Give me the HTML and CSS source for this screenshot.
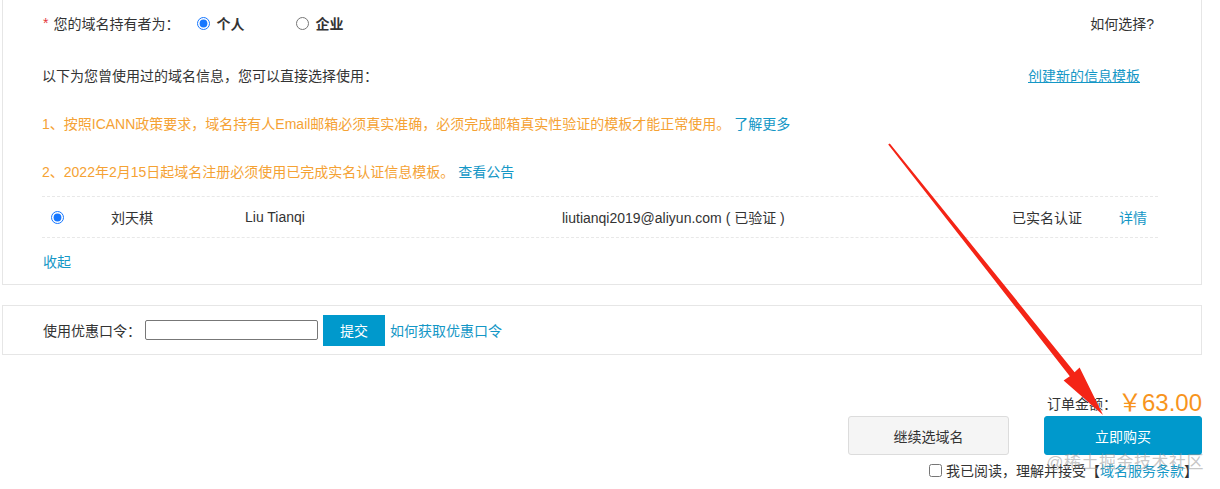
FILE: index.html
```html
<!DOCTYPE html>
<html lang="zh-CN">
<head>
<meta charset="utf-8">
<title>域名注册</title>
<link rel="stylesheet" href="styles.css">
</head>
<body>
<div class="page">
  <section class="panel holder-panel">
    <div class="owner-row">
      <div class="owner-left">
        <span class="req">*</span><span class="owner-label">您的域名持有者为：</span>
        <label class="opt"><input type="radio" name="owner" checked><span>个人</span></label>
        <label class="opt opt2"><input type="radio" name="owner"><span>企业</span></label>
      </div>
      <span class="how">如何选择?</span>
    </div>
    <div class="lines">
      <div class="line line-head">
        <span>以下为您曾使用过的域名信息，您可以直接选择使用：</span>
        <a class="link under create">创建新的信息模板</a>
      </div>
      <div class="line warn">1、按照ICANN政策要求，域名持有人Email邮箱必须真实准确，必须完成邮箱真实性验证的模板才能正常使用。 <a class="link">了解更多</a></div>
      <div class="line warn">2、2022年2月15日起域名注册必须使用已完成实名认证信息模板。 <a class="link">查看公告</a></div>
    </div>
    <div class="tpl-row">
      <div class="c-radio"><input type="radio" name="tpl" checked></div>
      <div>刘天棋</div>
      <div class="latin">Liu Tianqi</div>
      <div class="latin">liutianqi2019@aliyun.com ( 已验证 )</div>
      <div>已实名认证</div>
      <div><a class="link">详情</a></div>
    </div>
    <div class="collapse"><a class="link">收起</a></div>
  </section>

  <section class="panel coupon-panel">
    <span class="coupon-label">使用优惠口令：</span>
    <input class="coupon-input" type="text">
    <button class="submit-btn">提交</button>
    <a class="link coupon-link">如何获取优惠口令</a>
  </section>

  <div class="order">
    <div class="total"><span class="total-label">订单金额：</span><span class="price">￥63.00</span></div>
    <div class="actions">
      <button class="btn-ghost">继续选域名</button>
      <button class="btn-buy">立即购买</button>
    </div>
    <div class="agree">
      <input type="checkbox" class="agree-box"><span>我已阅读，理解并接受【<a class="link">域名服务条款</a>】</span>
    </div>
    <div class="watermark">@稀土掘金技术社区</div>
  </div>

  <svg class="arrow" width="1220" height="489" viewBox="0 0 1220 489" aria-hidden="true">
    <polygon fill="#f42416" points="888.2,144.6 889.8,143.4 1074.6,372.2 1079.6,367.5 1103,415 1063.6,380.5 1069.8,376.2"/>
  </svg>
</div>
</body>
</html>
```

FILE: styles.css
```css
* { box-sizing: border-box; }
html, body { margin: 0; padding: 0; background: #fff; }
body {
  font-family: "Liberation Sans", "Noto Sans CJK SC", sans-serif;
  font-size: 14px;
  color: #333;
}
.page {
  position: relative;
  width: 1220px;
  height: 489px;
  overflow: hidden;
  padding-left: 2px;
}
.panel {
  width: 1200px;
  border: 1px solid #e6e6e6;
  background: #fff;
}
.holder-panel {
  border-top: none;
  padding: 0 43px 0 39px;
}
.owner-row {
  height: 46px;
  display: flex;
  align-items: center;
  justify-content: space-between;
  padding-right: 4px;
}
.owner-left { display: flex; align-items: center; }
.req { color: #e4393c; margin-right: 5px; margin-left: 1px; }
.owner-label { width: 144px; }
.opt { display: flex; align-items: center; font-weight: bold; color: #333; }
.opt input { margin: 0 6px 0 0; width: 13px; height: 13px; accent-color: #1677ff; }
.opt2 { margin-left: 52px; }
.lines { padding-top: 6px; }
.line { height: 48px; line-height: 48px; display: flex; align-items: center; }
.line-head { justify-content: space-between; }
.create { margin-right: 18px; }
.warn { color: #f5a234; white-space: pre; }
.link { color: #1497c6; text-decoration: none; cursor: pointer; }
.under { text-decoration: underline; }
.how { color: #333; }
.tpl-row {
  display: grid;
  grid-template-columns: 69px 134px 317px 450px 107px 1fr;
  align-items: center;
  height: 42px;
  border-top: 1px dashed #e8e8e8;
  border-bottom: 1px dashed #e8e8e8;
}
.c-radio { padding-left: 9px; display: flex; align-items: center; }
.c-radio input { margin: 0; width: 13px; height: 13px; accent-color: #1677ff; }
.latin { font-family: "Liberation Sans", "Noto Sans CJK SC", sans-serif; }
.collapse { height: 46px; display: flex; align-items: center; padding-left: 1px; }

.coupon-panel {
  margin-top: 20px;
  height: 50px;
  padding-left: 40px;
  display: flex;
  align-items: center;
}
.coupon-label { width: 102px; }
.coupon-input {
  width: 173px;
  height: 20px;
  border: 1px solid #777;
  border-radius: 2px;
  padding: 0 4px;
  font-size: 13px;
}
.submit-btn {
  margin-left: 5px;
  width: 62px;
  height: 31px;
  border: none;
  background: #0099cc;
  color: #fff;
  font-family: inherit;
  font-size: 14px;
  padding: 0;
}
.coupon-link { margin-left: 5px; }

.order {
  width: 1200px;
  padding-top: 31px;
  display: flex;
  flex-direction: column;
  align-items: flex-end;
  position: relative;
}
.total { display: flex; align-items: center; height: 28px; }
.total-label { margin-right: 1px; margin-top: 5px; }
.price { color: #f7941d; font-size: 24px; font-family: "Liberation Sans", "Noto Sans CJK SC", sans-serif; }
.actions { display: flex; gap: 35px; margin-top: 2px; }
.actions button {
  height: 39px;
  font-family: inherit;
  font-size: 14px;
  border-radius: 3px;
  padding: 0;
}
.btn-ghost { width: 161px; background: #f5f5f5; border: 1px solid #dcdcdc; color: #333; }
.btn-buy { width: 158px; background: #0099cc; border: 1px solid #0099cc; color: #fff; }
.agree {
  display: flex;
  align-items: center;
  height: 30px;
  padding-right: 4px;
}
.agree-box { margin: 0 4px 0 0; width: 13px; height: 13px; }
.watermark {
  position: absolute;
  right: -2px;
  top: 93px;
  font-size: 17px;
  color: rgba(150, 150, 150, 0.55);
  letter-spacing: 0.5px;
  pointer-events: none;
}
.arrow {
  position: absolute;
  left: 0;
  top: 0;
  pointer-events: none;
}
```
